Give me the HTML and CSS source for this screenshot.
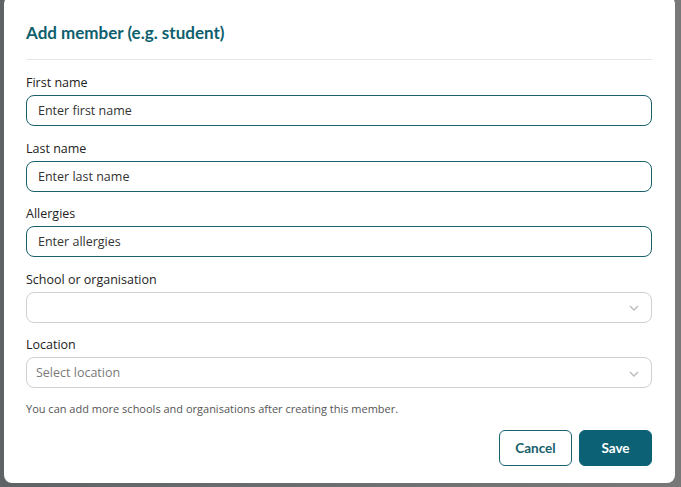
FILE: index.html
```html
<!DOCTYPE html>
<html lang="en">
<head>
<meta charset="utf-8">
<title>Add member</title>
<link rel="stylesheet" href="styles.css">
</head>
<body>
<div class="modal">
  <h2 class="title">Add member (e.g. student)</h2>
  <div class="divider"></div>
  <form class="form">
    <div class="field">
      <label class="label">First name</label>
      <div class="input active">Enter first name</div>
    </div>
    <div class="field">
      <label class="label">Last name</label>
      <div class="input active">Enter last name</div>
    </div>
    <div class="field">
      <label class="label">Allergies</label>
      <div class="input active">Enter allergies</div>
    </div>
    <div class="field">
      <label class="label">School or organisation</label>
      <div class="select"><span class="placeholder"></span>
        <svg class="chev" width="10" height="6" viewBox="0 0 10 6"><path d="M1 1 L5 5 L9 1" fill="none" stroke="#b9b9b9" stroke-width="1.3"/></svg>
      </div>
    </div>
    <div class="field">
      <label class="label">Location</label>
      <div class="select"><span class="placeholder">Select location</span>
        <svg class="chev" width="10" height="6" viewBox="0 0 10 6"><path d="M1 1 L5 5 L9 1" fill="none" stroke="#b9b9b9" stroke-width="1.3"/></svg>
      </div>
    </div>
    <p class="help">You can add more schools and organisations after creating this member.</p>
    <div class="actions">
      <button type="button" class="btn btn-outline">Cancel</button>
      <button type="button" class="btn btn-primary">Save</button>
    </div>
  </form>
</div>
</body>
</html>
```

FILE: styles.css
```css
* { box-sizing: border-box; }
html, body { margin: 0; height: 100%; }
body {
  background: linear-gradient(90deg, #5e6466 0%, #6c6f70 50%, #787878 100%);
  padding: 0 6px 0 4px;
  overflow: hidden;
}
.modal {
  background: #fff;
  margin-top: -4px;
  height: 487px;
  border-radius: 8px;
  padding: 27px 22px 0 22px;
}
.title {
  margin: 0;
  font-family: "Lato", "Open Sans", sans-serif;
  font-weight: 700;
  font-size: 17px;
  line-height: 20px;
  color: #0e5f6e;
}
.divider {
  height: 1px;
  background: #e6e6e6;
  margin: 16px 1px 0 0;
}
.form {
  display: flex;
  flex-direction: column;
  padding-top: 15px;
  font-family: "Open Sans", "Noto Sans", sans-serif;
}
.field {
  display: flex;
  flex-direction: column;
  gap: 4px;
  margin-bottom: 14.5px;
}
.label {
  font-size: 12.5px;
  line-height: 16px;
  color: #222;
}
.input, .select {
  height: 31px;
  border-radius: 8px;
  display: flex;
  align-items: center;
  font-size: 12.5px;
  color: #333;
  margin-right: 1px;
}
.input {
  border: 1px solid #17606c;
  padding-left: 11px;
}
.select {
  border: 1px solid #d0d0d0;
  padding-left: 9px;
  padding-right: 12px;
  justify-content: space-between;
}
.placeholder { color: #7a7a7a; }
.chev { display: block; margin-top: 2px; }
.help {
  margin: -1px 0 0 0;
  font-size: 11px;
  line-height: 14px;
  color: #555;
}
.actions {
  display: flex;
  justify-content: flex-end;
  gap: 7px;
  margin-top: 14px;
  margin-right: 1px;
}
.btn {
  width: 73px;
  height: 36px;
  border-radius: 6px;
  font-family: "Lato", "Open Sans", sans-serif;
  font-weight: 700;
  font-size: 13.5px;
  cursor: pointer;
}
.btn-outline {
  background: #fff;
  border: 1px solid #17606c;
  color: #17606c;
}
.btn-primary {
  background: #0c6274;
  border: 1px solid #0c6274;
  color: #fff;
}
```
